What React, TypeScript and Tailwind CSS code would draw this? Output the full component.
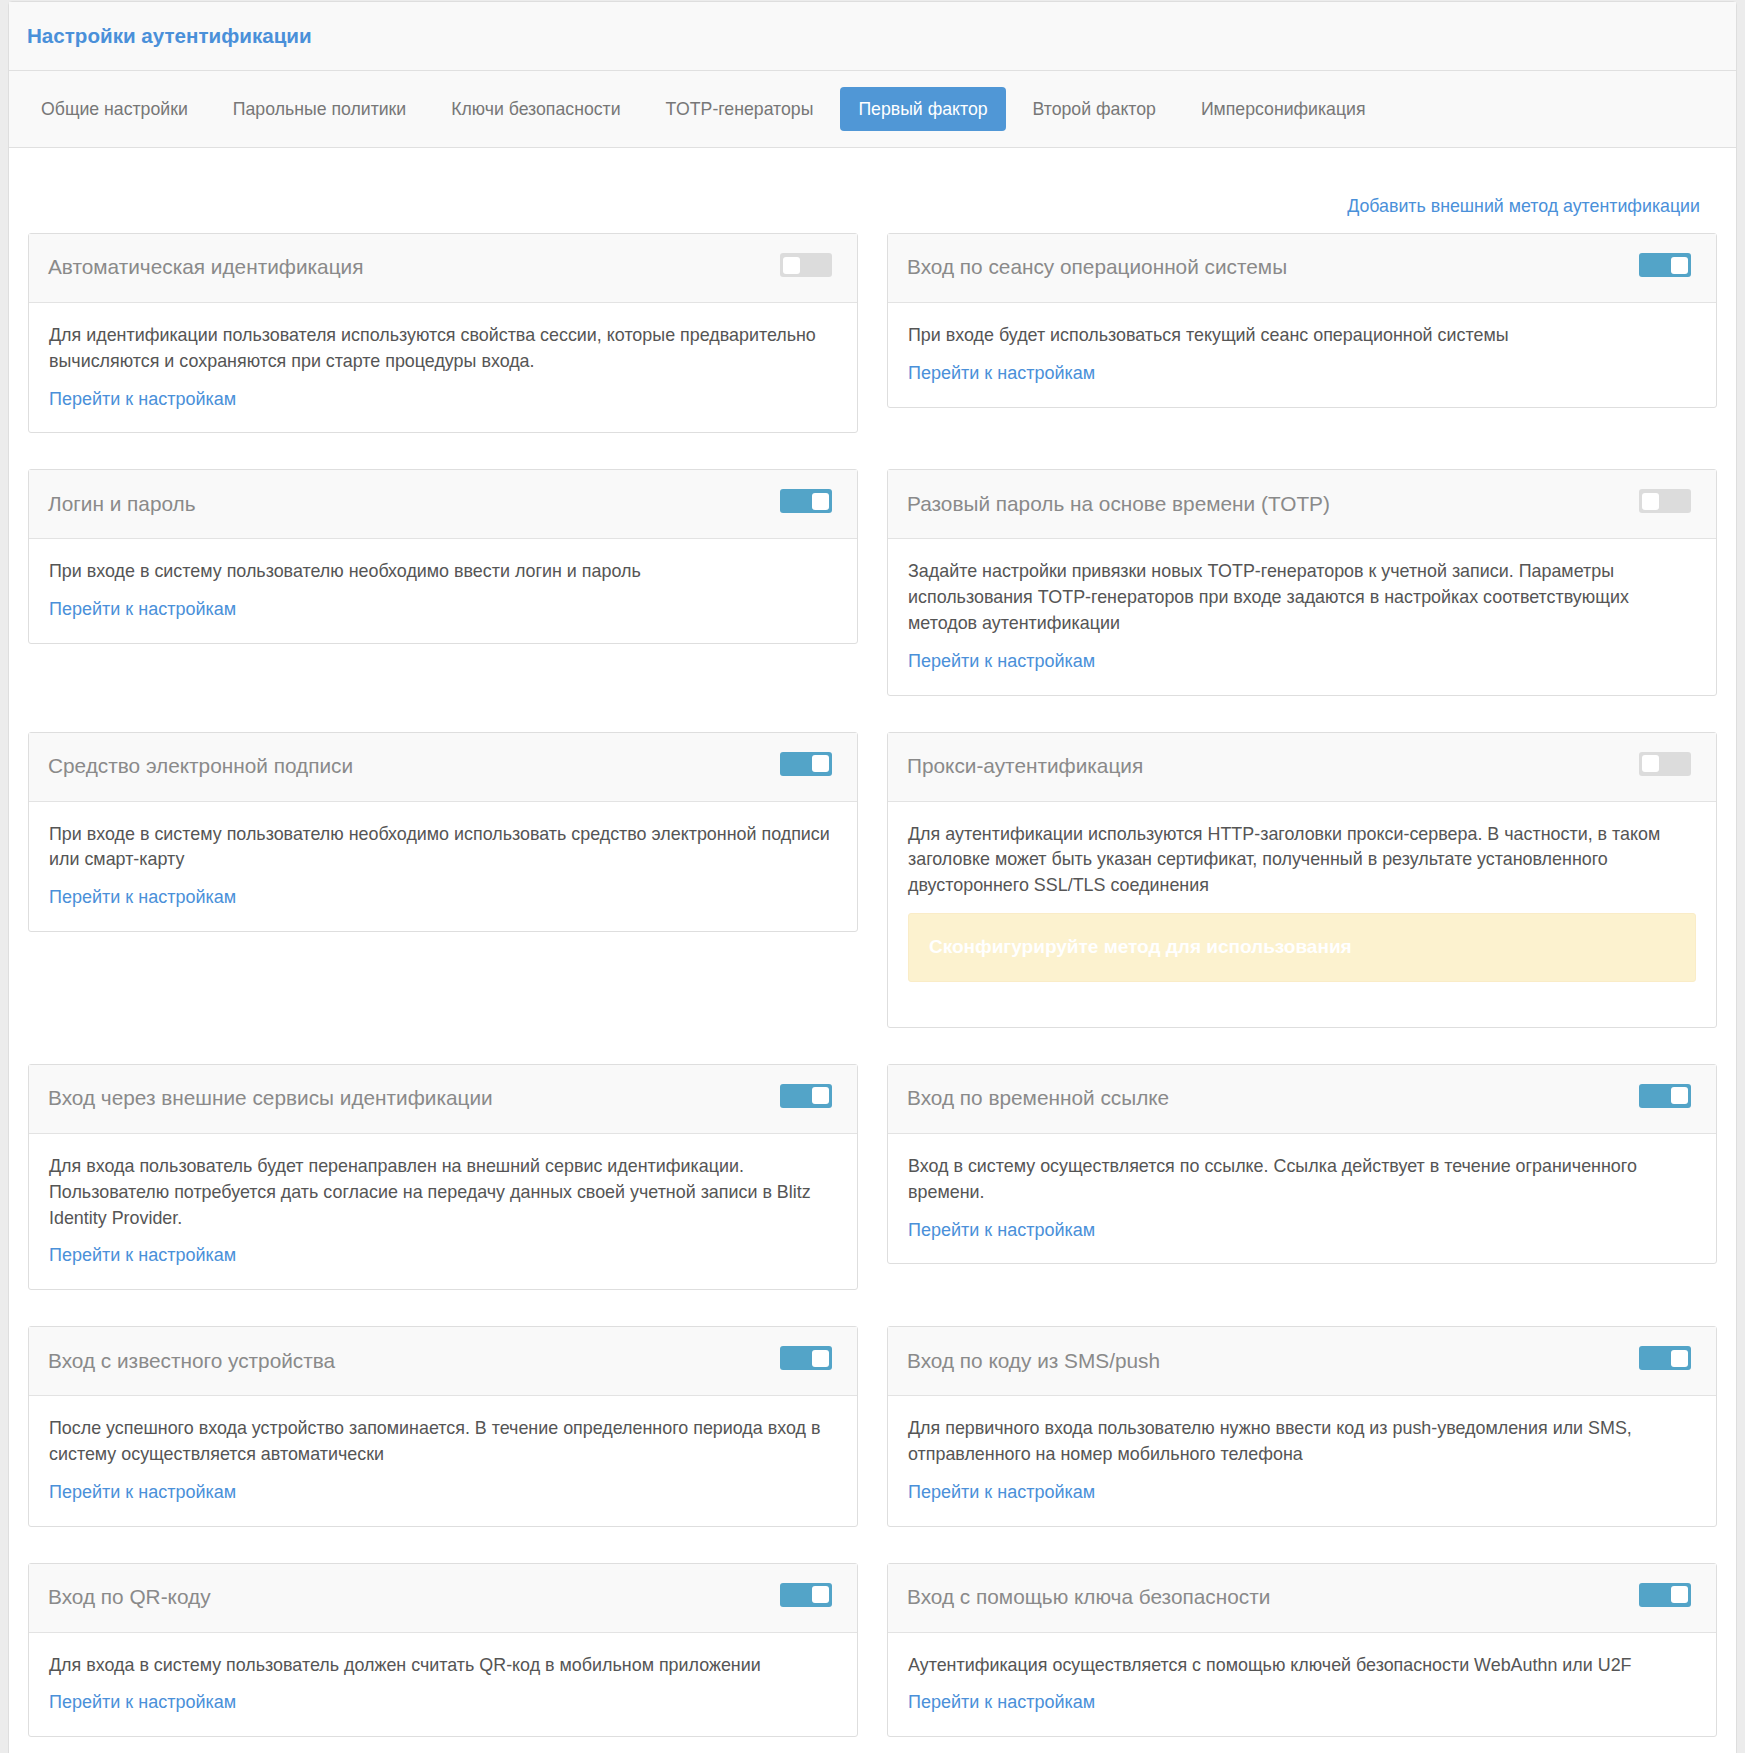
import React from 'react'

type Method = {
  title: string
  enabled: boolean
  text: string
  link?: boolean
  warning?: string
}

const tabs = [
  'Общие настройки',
  'Парольные политики',
  'Ключи безопасности',
  'TOTP-генераторы',
  'Первый фактор',
  'Второй фактор',
  'Имперсонификация',
]

const rows: [Method, Method][] = [
  [
    {
      title: 'Автоматическая идентификация',
      enabled: false,
      text: 'Для идентификации пользователя используются свойства сессии, которые предварительно вычисляются и сохраняются при старте процедуры входа.',
      link: true,
    },
    {
      title: 'Вход по сеансу операционной системы',
      enabled: true,
      text: 'При входе будет использоваться текущий сеанс операционной системы',
      link: true,
    },
  ],
  [
    {
      title: 'Логин и пароль',
      enabled: true,
      text: 'При входе в систему пользователю необходимо ввести логин и пароль',
      link: true,
    },
    {
      title: 'Разовый пароль на основе времени (TOTP)',
      enabled: false,
      text: 'Задайте настройки привязки новых TOTP-генераторов к учетной записи. Параметры использования TOTP-генераторов при входе задаются в настройках соответствующих методов аутентификации',
      link: true,
    },
  ],
  [
    {
      title: 'Средство электронной подписи',
      enabled: true,
      text: 'При входе в систему пользователю необходимо использовать средство электронной подписи или смарт-карту',
      link: true,
    },
    {
      title: 'Прокси-аутентификация',
      enabled: false,
      text: 'Для аутентификации используются HTTP-заголовки прокси-сервера. В частности, в таком заголовке может быть указан сертификат, полученный в результате установленного двустороннего SSL/TLS соединения',
      warning: 'Сконфигурируйте метод для использования',
    },
  ],
  [
    {
      title: 'Вход через внешние сервисы идентификации',
      enabled: true,
      text: 'Для входа пользователь будет перенаправлен на внешний сервис идентификации. Пользователю потребуется дать согласие на передачу данных своей учетной записи в Blitz Identity Provider.',
      link: true,
    },
    {
      title: 'Вход по временной ссылке',
      enabled: true,
      text: 'Вход в систему осуществляется по ссылке. Ссылка действует в течение ограниченного времени.',
      link: true,
    },
  ],
  [
    {
      title: 'Вход с известного устройства',
      enabled: true,
      text: 'После успешного входа устройство запоминается. В течение определенного периода вход в систему осуществляется автоматически',
      link: true,
    },
    {
      title: 'Вход по коду из SMS/push',
      enabled: true,
      text: 'Для первичного входа пользователю нужно ввести код из push-уведомления или SMS, отправленного на номер мобильного телефона',
      link: true,
    },
  ],
  [
    {
      title: 'Вход по QR-коду',
      enabled: true,
      text: 'Для входа в систему пользователь должен считать QR-код в мобильном приложении',
      link: true,
    },
    {
      title: 'Вход с помощью ключа безопасности',
      enabled: true,
      text: 'Аутентификация осуществляется с помощью ключей безопасности WebAuthn или U2F',
      link: true,
    },
  ],
]

function Toggle({ on }: { on: boolean }) {
  return (
    <span
      className={`mb-[4px] flex h-[24px] w-[52px] shrink-0 items-center rounded-[3px] px-[3px] ${
        on ? 'justify-end bg-[#53a4c8]' : 'justify-start bg-[#dcdcdc]'
      }`}
    >
      <span className="h-[17px] w-[17px] rounded-[3px] bg-white" />
    </span>
  )
}

function MethodCard({ m }: { m: Method }) {
  return (
    <div className="rounded-[3px] border border-[#dedede] bg-white">
      <div className="flex h-[69px] items-center justify-between border-b border-[#e3e3e3] bg-[#f9f9f9] pb-[2px] pl-[19px] pr-[25px]">
        <span className="text-[20.8px] text-[#8a8a8a]">{m.title}</span>
        <Toggle on={m.enabled} />
      </div>
      <div className="px-[20px] pt-[20px] pb-[20px]">
        <p className="text-[17.9px] leading-[25.8px] text-[#555]">{m.text}</p>
        {m.link && (
          <a className="mt-[12px] block text-[18px] leading-[25.8px] text-[#4a90d9]" href="#">
            Перейти к настройкам
          </a>
        )}
        {m.warning && (
          <div className="mt-[14px] mb-[25px] flex h-[69px] items-center rounded-[3px] border border-[#faecc7] bg-[#fcf2cf] px-[20px]">
            <span className="text-[19px] font-bold text-white">{m.warning}</span>
          </div>
        )}
      </div>
    </div>
  )
}

export default function App() {
  return (
    <div className="min-h-screen bg-[#ececec] px-[8px] pt-[1px] font-['Liberation_Sans',Arial,sans-serif]">
      <div className="rounded-t-[4px] border border-[#dedede] bg-white">
        {/* заголовок */}
        <div className="flex h-[69px] items-center border-b border-[#e0e0e0] bg-[#f9f9f9] px-[18px]">
          <h1 className="text-[20.6px] font-bold text-[#4a90d9]">Настройки аутентификации</h1>
        </div>

        {/* вкладки */}
        <div className="flex h-[77px] items-center gap-[9px] border-b border-[#e0e0e0] bg-[#f9f9f9] px-[14px]">
          {tabs.map(t => (
            <span
              key={t}
              className={`flex h-[44px] items-center rounded-[4px] px-[18px] text-[17.7px] ${
                t === 'Первый фактор' ? 'bg-[#5097d6] text-white' : 'text-[#777]'
              }`}
            >
              {t}
            </span>
          ))}
        </div>

        {/* методы */}
        <div className="px-[19px] pt-[46px] pb-[40px]">
          <div className="mb-[14px] flex justify-end pr-[17px]">
            <a className="text-[17.8px] leading-[25px] text-[#4a90d9]" href="#">
              Добавить внешний метод аутентификации
            </a>
          </div>
          <div className="grid grid-cols-2 items-start gap-x-[29px] gap-y-[36px]">
            {rows.flat().map(m => (
              <MethodCard key={m.title} m={m} />
            ))}
          </div>
        </div>
      </div>
    </div>
  )
}
